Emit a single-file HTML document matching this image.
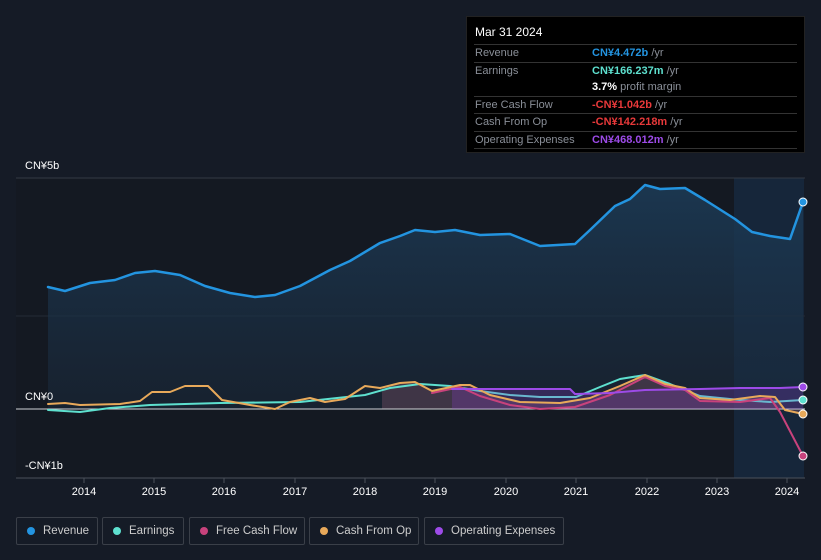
<!DOCTYPE html><html><head><style>
body{margin:0;width:821px;height:560px;background:#151b26;font-family:"Liberation Sans",sans-serif;overflow:hidden;position:relative}
.tt{position:absolute;left:466px;top:16px;width:339px;height:137px;background:#000;border:1px solid #222;box-sizing:border-box;font-size:11px;color:#8a8f98}
.tt .h{color:#fff;font-size:12px;padding:8px 8px 5px}
.r{display:flex;border-top:1px solid #333;margin:0 7px;height:16.5px;line-height:16.5px}
.r .l{width:117px;padding-left:1px}
.b{font-weight:bold}
.leg{position:absolute;top:517px;height:28px;border:1px solid #3a3f48;border-radius:2px;box-sizing:border-box;color:#ccc;font-size:11.5px;line-height:26px;padding-left:26px}
.leg i{position:absolute;left:10px;top:9px;width:8px;height:8px;border-radius:50%}
.ax{position:absolute;color:#fff;font-size:11px}
svg path{stroke-linejoin:round;stroke-linecap:round}
</style></head><body>
<svg width="821" height="560" style="position:absolute;left:0;top:0">
<defs><linearGradient id="g" x1="0" y1="0" x2="0" y2="1"><stop offset="0" stop-color="#1c3a55" stop-opacity=".9"/><stop offset="1" stop-color="#1a2a3c" stop-opacity=".5"/></linearGradient></defs>
<rect x="16" y="178" width="718" height="300" fill="#141922"/>
<rect x="734" y="178" width="70" height="300" fill="#16263a"/>
<line x1="16" y1="178" x2="805" y2="178" stroke="#333a44"/>
<line x1="16" y1="316" x2="805" y2="316" stroke="#232a35"/>
<path d="M48,287 L65,291 90,283 115,280 135,273 155,271 180,275 205,286 230,293 255,297 275,295 300,286 330,270 350,261 380,243 400,236 415,230 435,232 455,230 480,235 510,234 540,246 575,244 590,230 615,206 630,199 645,185 660,189 685,188 705,200 735,219 752,232 770,236 790,239 803,202 L803,409 48,409Z" fill="url(#g)"/>
<path d="M48,287 L65,291 90,283 115,280 135,273 155,271 180,275 205,286 230,293 255,297 275,295 300,286 330,270 350,261 380,243 400,236 415,230 435,232 455,230 480,235 510,234 540,246 575,244 590,230 615,206 630,199 645,185 660,189 685,188 705,200 735,219 752,232 770,236 790,239 803,202" fill="none" stroke="#2394e0" stroke-width="2.5"/>
<path d="M382,388 L400,383 415,382 432,391 460,385 470,385 490,395 520,402 560,403 590,398 620,386 645,375 665,384 685,388 700,398 730,400 760,396 775,397 785,410 803,414 L803,409 382,409Z" fill="#8a5a70" fill-opacity=".35"/>
<line x1="16" y1="409" x2="805" y2="409" stroke="#cfd3d8" stroke-width="1"/>
<path d="M48,410 L80,412 110,408 150,405 220,403 300,402 365,395 390,388 420,384 450,386 480,391 510,395 540,397 576,397 600,387 620,379 645,375 670,384 700,396 740,400 770,402 803,400" fill="none" stroke="#5ee0cf" stroke-width="2"/>
<path d="M452,389 L520,389 570,389 575,394 610,393 645,390 700,389 740,388 780,388 803,387 L803,409 452,409Z" fill="#8a3fd0" fill-opacity=".25"/>
<path d="M432,393 L460,387 480,396 510,405 540,409 575,407 610,395 645,377 665,386 685,390 700,401 740,402 770,398 780,412 803,456" fill="none" stroke="#c8427c" stroke-width="2"/>
<path d="M48,404 L65,403 80,405 120,404 140,401 152,392 170,392 185,386 208,386 222,400 250,405 275,409 290,402 310,398 325,402 345,399 365,386 380,388 400,383 415,382 432,391 460,385 470,385 490,395 520,402 560,403 590,398 620,386 645,375 665,384 685,388 700,398 730,400 760,396 775,397 785,410 803,414" fill="none" stroke="#e8a95a" stroke-width="2"/>
<path d="M452,389 L520,389 570,389 575,394 610,393 645,390 700,389 740,388 780,388 803,387" fill="none" stroke="#9d4be8" stroke-width="2"/>
<line x1="16" y1="478" x2="805" y2="478" stroke="#4a505a"/>
<g stroke="#4a505a"><line x1="84" y1="478" x2="84" y2="483"/><line x1="154" y1="478" x2="154" y2="483"/><line x1="224" y1="478" x2="224" y2="483"/><line x1="295" y1="478" x2="295" y2="483"/><line x1="365" y1="478" x2="365" y2="483"/><line x1="435" y1="478" x2="435" y2="483"/><line x1="506" y1="478" x2="506" y2="483"/><line x1="576" y1="478" x2="576" y2="483"/><line x1="647" y1="478" x2="647" y2="483"/><line x1="717" y1="478" x2="717" y2="483"/><line x1="787" y1="478" x2="787" y2="483"/></g>
<g fill="#fff" font-size="11" text-anchor="middle" font-family="Liberation Sans"><text x="84" y="495">2014</text><text x="154" y="495">2015</text><text x="224" y="495">2016</text><text x="295" y="495">2017</text><text x="365" y="495">2018</text><text x="435" y="495">2019</text><text x="506" y="495">2020</text><text x="576" y="495">2021</text><text x="647" y="495">2022</text><text x="717" y="495">2023</text><text x="787" y="495">2024</text></g>
<circle cx="803" cy="202" r="4" fill="#2394e0" stroke="#fff" stroke-width="1"/>
<circle cx="803" cy="387" r="4" fill="#9d4be8" stroke="#fff" stroke-width="1"/>
<circle cx="803" cy="400" r="4" fill="#5ee0cf" stroke="#fff" stroke-width="1"/>
<circle cx="803" cy="414" r="4" fill="#e8a95a" stroke="#fff" stroke-width="1"/>
<circle cx="803" cy="456" r="4" fill="#c8427c" stroke="#fff" stroke-width="1"/>
</svg>
<div class="ax" style="left:25px;top:160px">CN¥5b</div>
<div class="ax" style="left:25px;top:391px">CN¥0</div>
<div class="ax" style="left:25px;top:460px">-CN¥1b</div>
<div class="tt"><div class="h">Mar 31 2024</div>
<div class="r"><span class="l">Revenue</span><span><b style="color:#2394e0">CN¥4.472b</b> /yr</span></div>
<div class="r"><span class="l">Earnings</span><span><b style="color:#5ee0cf">CN¥166.237m</b> /yr</span></div>
<div class="r" style="border:0"><span class="l"></span><span><b style="color:#fff">3.7%</b> profit margin</span></div>
<div class="r"><span class="l">Free Cash Flow</span><span><b style="color:#e8393a">-CN¥1.042b</b> /yr</span></div>
<div class="r"><span class="l">Cash From Op</span><span><b style="color:#e8393a">-CN¥142.218m</b> /yr</span></div>
<div class="r" style="border-bottom:1px solid #333"><span class="l">Operating Expenses</span><span><b style="color:#9d4be8">CN¥468.012m</b> /yr</span></div>
</div>
<div class="leg" style="left:16px;width:82px"><i style="background:#2394e0"></i>Revenue</div>
<div class="leg" style="left:102px;width:82px"><i style="background:#5ee0cf"></i>Earnings</div>
<div class="leg" style="left:189px;width:116px"><i style="background:#c8427c"></i>Free Cash Flow</div>
<div class="leg" style="left:309px;width:110px"><i style="background:#e8a95a"></i>Cash From Op</div>
<div class="leg" style="left:424px;width:140px"><i style="background:#9d4be8"></i>Operating Expenses</div>
</body></html>
